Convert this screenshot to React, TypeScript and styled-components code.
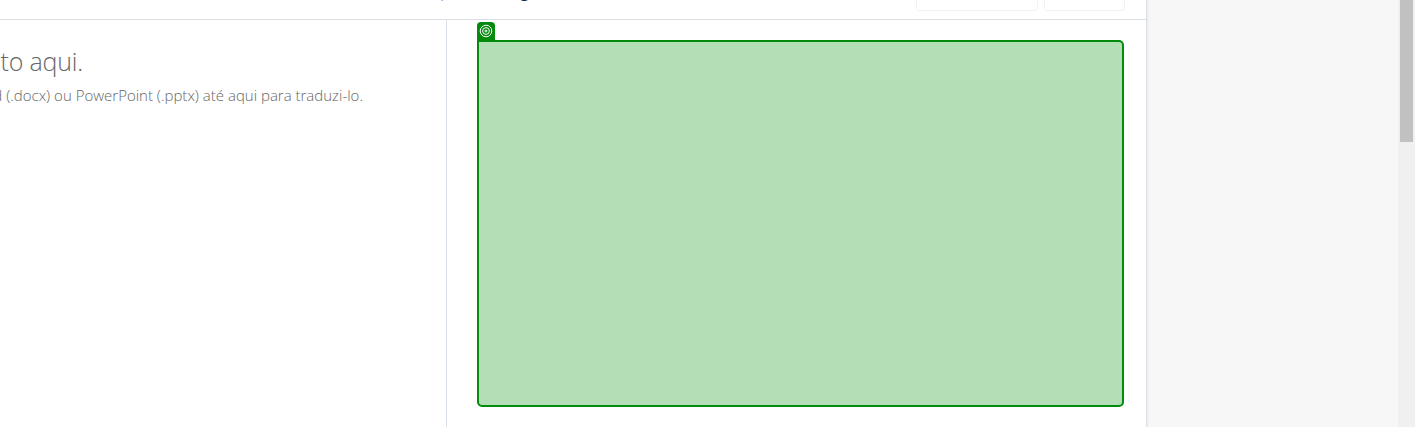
import React from "react";
import styled, { createGlobalStyle } from "styled-components";

const GlobalStyle = createGlobalStyle`
  * { box-sizing: border-box; }
  body { margin: 0; overflow: hidden; font-family: "Open Sans", "Noto Sans", sans-serif; }
`;

const Page = styled.div`
  display: flex;
  width: 1415px;
  height: 427px;
  overflow: hidden;
  background: #f7f7f7;
`;

const Translator = styled.main`
  display: flex;
  flex-direction: column;
  width: 1147px;
  background: #fff;
  border-right: 1px solid #dae1e8;
  box-shadow: 1px 0 2px rgba(0, 0, 0, 0.06);
`;

const Toolbar = styled.header`
  display: flex;
  align-items: flex-end;
  flex: none;
  height: 20px;
  overflow: hidden;
  padding: 0 21px 8px 436px;
  border-bottom: 1px solid #dddfe7;
`;

const Language = styled.div`
  display: flex;
  flex: 1;
  align-items: baseline;
  height: 20px;
  margin-bottom: 10px;
  font-size: 16px;
  line-height: 20px;
  white-space: pre;
`;

const Word = styled.span<{ $width?: number; $strong?: boolean }>`
  width: ${(p) => (p.$width ? `${p.$width}px` : "auto")};
  color: ${(p) => (p.$strong ? "#0f2b46" : "#6e6e6e")};
  font-weight: ${(p) => (p.$strong ? 600 : 300)};
`;

const ToolButton = styled.button<{ $width: number }>`
  flex: none;
  width: ${(p) => p.$width}px;
  height: 34px;
  margin-left: 6px;
  padding: 0;
  background: #fff;
  border: 1px solid #f2f2f2;
  border-radius: 3px;
`;

const Panels = styled.div`
  display: flex;
  flex: 1;
`;

const Source = styled.section`
  display: flex;
  flex-direction: column;
  width: 447px;
  overflow: hidden;
  padding-top: 24px;
  border-right: 1px solid #dae1e8;
  color: #666;
  font-weight: 300;
`;

const Line = styled.p<{ $right: number; $size: number; $height: number; $spacing: number }>`
  display: flex;
  justify-content: flex-end;
  width: ${(p) => p.$right}px;
  margin: 0;
  font-size: ${(p) => p.$size}px;
  line-height: ${(p) => p.$height}px;
  letter-spacing: ${(p) => p.$spacing}px;
  white-space: nowrap;
`;

const Target = styled.section`
  display: flex;
  flex: 1;
  flex-direction: column;
  align-items: flex-start;
  padding: 2px 22px 20px 30px;
`;

const Badge = styled.div`
  display: flex;
  justify-content: center;
  width: 18px;
  height: 18px;
  padding-top: 2px;
  background: #048a0c;
  border-radius: 4px 4px 0 0;
`;

const Highlight = styled.div`
  flex: 1;
  width: 100%;
  background: #b4deb5;
  border: 2px solid #048a0c;
  border-radius: 0 5px 5px 5px;
`;

const Scrollbar = styled.div`
  display: flex;
  justify-content: center;
  width: 17px;
  margin-left: auto;
  background: #f0f0f0;
`;

const Thumb = styled.div`
  width: 13px;
  height: 142px;
  background: #c1c1c1;
`;

export default function App() {
  return (
    <>
      <GlobalStyle />
      <Page>
        <Translator>
          <Toolbar>
            <Language>
              <Word $width={84}> para</Word>
              <Word $strong>g</Word>
            </Language>
            <ToolButton $width={122} aria-label="Tom" />
            <ToolButton $width={81} aria-label="Glossário" />
          </Toolbar>
          <Panels>
            <Source>
              <Line $right={83} $size={25} $height={35} $spacing={-0.2}>texto aqui.</Line>
              <Line $right={363} $size={15} $height={32} $spacing={0}>
                Word (.docx) ou PowerPoint (.pptx) até aqui para traduzi-lo.
              </Line>
            </Source>
            <Target>
              <Badge>
                <svg width="14" height="14" viewBox="0 0 14 14" fill="none" stroke="#fff">
                  <circle cx="7" cy="7" r="5.8" />
                  <circle cx="7" cy="7" r="3.4" />
                  <circle cx="7" cy="7" r="1" />
                </svg>
              </Badge>
              <Highlight />
            </Target>
          </Panels>
        </Translator>
        <Scrollbar>
          <Thumb />
        </Scrollbar>
      </Page>
    </>
  );
}
